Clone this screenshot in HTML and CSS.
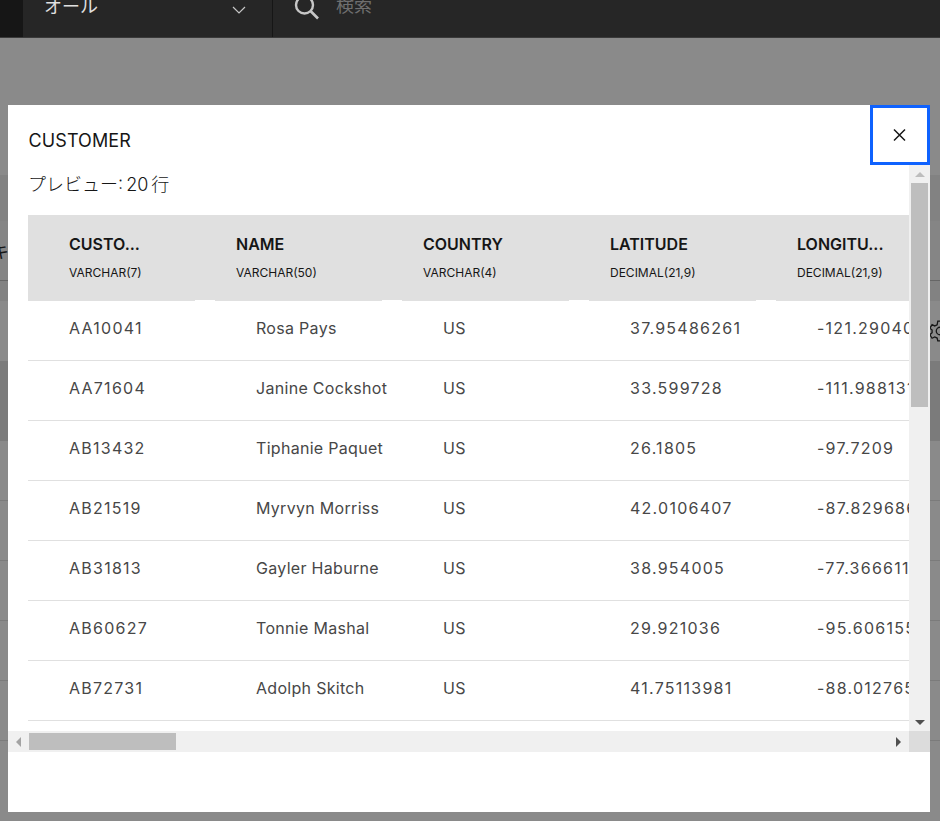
FILE: index.html
```html
<!DOCTYPE html>
<html lang="ja">
<head>
<meta charset="utf-8">
<title>CUSTOMER</title>
<link rel="stylesheet" href="styles.css">
</head>
<body>
<header class="topbar">
  <div class="topbar-edge"></div>
  <div class="scope">
    <span class="scope-label">オール</span>
    <svg class="chevron" width="14" height="8" viewBox="0 0 14 8"><path d="M1 1l6 6 6-6" fill="none" stroke="#c6c6c6" stroke-width="1.2"/></svg>
  </div>
  <div class="search">
    <svg class="search-icon" width="30" height="30" viewBox="0 0 30 30"><circle cx="11.5" cy="10" r="8.5" fill="none" stroke="#c6c6c6" stroke-width="2.4"/><path d="M17.5 16L25 23.5" fill="none" stroke="#c6c6c6" stroke-width="2.6"/></svg>
    <span class="search-label">検索</span>
  </div>
</header>
<main class="page">
  <div class="band band-top"></div>
  <div class="band band-key"><span class="cut-label">キ</span></div>
  <div class="band band-sub"></div>
  <div class="band band-gear">
    <svg class="gear" width="22" height="22" viewBox="0 0 20 20"><path d="M8 1h4l.6 2.6 2.2 1 2.4-1.2 2 3.2-2 1.8v2.4l2 1.8-2 3.2-2.4-1.2-2.2 1L12 19H8l-.6-2.6-2.2-1-2.4 1.2-2-3.2 2-1.8V9.2l-2-1.8 2-3.2 2.4 1.2 2.2-1z" fill="none" stroke="#161616" stroke-width="1.2"/><circle cx="10" cy="10" r="3.4" fill="none" stroke="#161616" stroke-width="1.2"/></svg>
  </div>
  <div class="band band-dark"></div>
  <div class="band band-row"></div>
  <div class="band band-row"></div>
  <div class="band band-row"></div>
  <div class="band band-row"></div>
  <div class="band band-row"></div>
  <div class="band band-row"></div>
</main>
<div class="backdrop">
  <section class="modal">
    <div class="modal-head">
      <h1 class="modal-title">CUSTOMER</h1>
      <button class="close" aria-label="閉じる">
        <svg width="14" height="14" viewBox="0 0 14 14"><path d="M1 1.5l11 11M12 1.5l-11 11" fill="none" stroke="#161616" stroke-width="1.5"/></svg>
      </button>
    </div>
    <div class="pane">
      <div class="viewport">
        <p class="count">プレビュー: 20 行</p>
        <table class="grid">
          <thead>
            <tr>
              <th><span class="col-name">CUSTO...</span><span class="col-type">VARCHAR(7)</span></th>
              <th><span class="col-name">NAME</span><span class="col-type">VARCHAR(50)</span></th>
              <th><span class="col-name">COUNTRY</span><span class="col-type">VARCHAR(4)</span></th>
              <th><span class="col-name">LATITUDE</span><span class="col-type">DECIMAL(21,9)</span></th>
              <th><span class="col-name">LONGITU...</span><span class="col-type">DECIMAL(21,9)</span></th>
            </tr>
          </thead>
          <tbody>
            <tr><td class="num">AA10041</td><td>Rosa Pays</td><td>US</td><td class="num">37.95486261</td><td class="num">-121.2904053</td></tr>
            <tr><td class="num">AA71604</td><td>Janine Cockshot</td><td>US</td><td class="num">33.599728</td><td class="num">-111.988131</td></tr>
            <tr><td class="num">AB13432</td><td>Tiphanie Paquet</td><td>US</td><td class="num">26.1805</td><td class="num">-97.7209</td></tr>
            <tr><td class="num">AB21519</td><td>Myrvyn Morriss</td><td>US</td><td class="num">42.0106407</td><td class="num">-87.829686</td></tr>
            <tr><td class="num">AB31813</td><td>Gayler Haburne</td><td>US</td><td class="num">38.954005</td><td class="num">-77.366611</td></tr>
            <tr><td class="num">AB60627</td><td>Tonnie Mashal</td><td>US</td><td class="num">29.921036</td><td class="num">-95.606155</td></tr>
            <tr><td class="num">AB72731</td><td>Adolph Skitch</td><td>US</td><td class="num">41.75113981</td><td class="num">-88.012765</td></tr>
          </tbody>
        </table>
      </div>
      <div class="vbar">
        <span class="arrow-box-v"><i class="arrow up"></i></span>
        <span class="vthumb"></span>
        <span class="bar-fill"></span>
        <span class="arrow-box-v"><i class="arrow down"></i></span>
      </div>
      <div class="hbar">
        <span class="arrow-box-h"><i class="arrow left"></i></span>
        <span class="hthumb"></span>
        <span class="bar-fill"></span>
        <span class="arrow-box-h"><i class="arrow right"></i></span>
      </div>
      <div class="corner"></div>
    </div>
    <div class="modal-foot"></div>
  </section>
</div>
</body>
</html>
```

FILE: styles.css
```css
html, body {
  margin: 0;
  height: 100%;
  overflow: hidden;
  background: #fff;
  font-family: Inter, "Noto Sans CJK JP", sans-serif;
  color: #161616;
}

.topbar {
  position: relative;
  z-index: 2;
  display: flex;
  height: 37px;
  overflow: hidden;
  background: #262626;
  border-bottom: 1px solid #3a3a3a;
}
.topbar-edge { width: 23px; background: #161616; }
.scope {
  width: 250px;
  display: flex;
  justify-content: space-between;
  padding: 0 26px 0 21px;
  box-sizing: border-box;
  border-right: 1px solid #161616;
}
.scope-label {
  margin-top: -6px;
  font-size: 18px;
  line-height: 26px;
  color: #e0e0e0;
}
.chevron { margin-top: 6px; }
.search { display: flex; }
.search-icon { margin: -5px 0 0 20px; }
.search-label {
  margin: -7px 0 0 13px;
  font-size: 18px;
  line-height: 26px;
  color: #6f6f6f;
}

.band { box-sizing: border-box; background: #fff; }
.band-top { height: 183px; border-bottom: 46px solid #eee; }
.band-key { height: 60px; border-bottom: 1px solid #b6b6b6; background: #f4f4f4; overflow: hidden; }
.cut-label { display: block; margin: 19px 0 0 -9px; font-size: 18px; line-height: 24px; }
.band-sub { height: 20px; background: #eee; }
.band-gear { height: 60px; display: flex; justify-content: flex-end; align-items: center; }
.gear { margin-right: -11px; }
.band-dark { height: 79px; background: #e0e0e0; }
.band-row { height: 60px; border-top: 1px solid #e0e0e0; }

.backdrop {
  position: fixed;
  inset: 0;
  z-index: 1;
  background: rgba(22, 22, 22, 0.5);
}
.modal {
  position: absolute;
  left: 8px;
  top: 105px;
  width: 922px;
  height: 707px;
  display: flex;
  flex-direction: column;
  background: #fff;
}
.modal-head { display: flex; justify-content: space-between; height: 60px; flex: none; }
.modal-title {
  margin: 24px 0 0 20.5px;
  font-size: 18px;
  font-weight: 400;
  line-height: 24px;
  letter-spacing: 0.1px;
  color: #161616;
}
.close {
  width: 60px;
  height: 60px;
  padding: 0;
  display: flex;
  align-items: center;
  justify-content: center;
  background: #fff;
  border: 3px solid #0f62fe;
}

.pane {
  display: grid;
  grid-template-columns: 901px 21px;
  grid-template-rows: 566px 21px;
  flex: none;
}
.viewport { overflow: hidden; padding-left: 20px; }
.count {
  margin: 0;
  height: 50px;
  font-size: 18px;
  font-weight: 300;
  line-height: 40px;
  word-spacing: -2px;
  color: #161616;
}
.grid {
  width: 915px;
  table-layout: fixed;
  border-collapse: separate;
  border-spacing: 0;
}
.grid th, .grid td { padding: 0 0 0 61px; text-align: left; white-space: nowrap; box-sizing: border-box; width: 187px; }
.grid th { position: relative; height: 86px; background: #e0e0e0; padding-left: 41px; vertical-align: top; }
.grid th:first-child, .grid td:first-child { padding-left: 41px; width: 167px; }
.grid th + th::after {
  content: "";
  position: absolute;
  left: 0;
  bottom: 0;
  width: 20px;
  height: 1px;
  background: #fff;
}
.col-name {
  display: block;
  margin-top: 17px;
  font-size: 16px;
  font-weight: 600;
  line-height: 24px;
  color: #161616;
}
.col-type {
  display: block;
  margin-top: 9px;
  font-size: 12px;
  font-weight: 400;
  line-height: 16px;
  color: #161616;
}
.grid td {
  height: 60px;
  padding-bottom: 6px;
  border-bottom: 1px solid #e0e0e0;
  font-size: 16px;
  letter-spacing: 0.3px;
  color: #474747;
}
.grid td.num { letter-spacing: 1.25px; }

.vbar, .hbar { display: flex; background: #f0f0f0; }
.vbar { flex-direction: column; }
.bar-fill { flex: 1; }
.arrow-box-v { display: flex; align-items: center; justify-content: center; height: 18px; flex: none; }
.arrow-box-h { display: flex; align-items: center; justify-content: center; width: 21px; flex: none; }
.vthumb { height: 224px; margin: 0 2px; background: #bebebe; flex: none; }
.hthumb { width: 147px; margin: 2px 0; background: #bebebe; flex: none; }
.arrow { display: block; width: 0; height: 0; border-style: solid; border-color: transparent; }
.arrow.up { border-width: 0 5px 5px; border-bottom-color: #bdbdbd; }
.arrow.down { border-width: 5px 5px 0; border-top-color: #505050; }
.arrow.left { border-width: 5px 5px 5px 0; border-right-color: #a3a3a3; }
.arrow.right { border-width: 5px 0 5px 5px; border-left-color: #505050; }
.corner { background: #dcdcdc; }
.modal-foot { flex: 1; }
```
